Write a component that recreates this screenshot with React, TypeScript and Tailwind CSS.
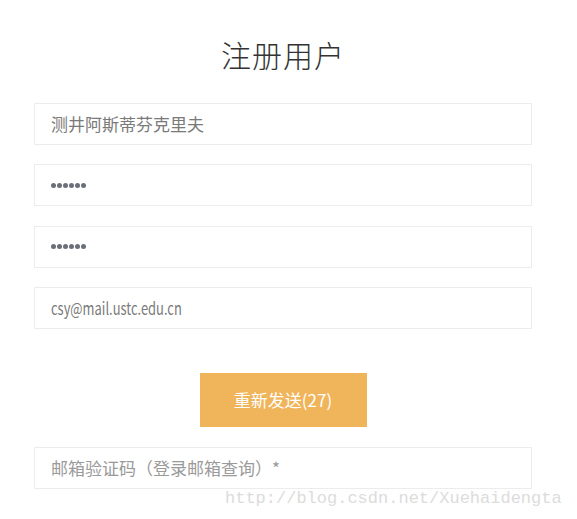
function Dots() {
  return (
    <div className="flex items-center gap-[1.4px]">
      {[0, 1, 2, 3, 4, 5].map((i) => (
        <span key={i} className="block h-[4.6px] w-[4.6px] rounded-full bg-[#6b6f78]" />
      ))}
    </div>
  );
}

export default function App() {
  const field =
    'h-[42px] w-full border border-[#ececec] bg-white px-[16px] flex items-center text-[17px] text-[#7a7a7a]';
  return (
    <div
      className="relative w-[577px] h-[519px] bg-white overflow-hidden"
      style={{ fontFamily: '"Noto Sans CJK SC", "Noto Sans", sans-serif' }}
    >
      <div className="ml-[34px] flex w-[498px] flex-col items-center pt-[33px]">
        <h1 className="text-[30px] leading-[42px] text-[#333] font-light tracking-[1px]">注册用户</h1>
        <div className="mt-[28px] flex w-full flex-col gap-[19.3px]">
          <div className={field}>测井阿斯蒂芬克里夫</div>
          <div className={field}>
            <Dots />
          </div>
          <div className={field}>
            <Dots />
          </div>
          <div className={field}>
            <span className="inline-block origin-left scale-x-[0.76] whitespace-nowrap">csy@mail.ustc.edu.cn</span>
          </div>
        </div>
        <button className="mt-[44px] h-[54px] w-[167px] bg-[#f0b45a] text-white text-[17px]">
          重新发送(27)
        </button>
        <div className={field + ' mt-[20px] text-[#9a9a9a]'}>邮箱验证码（登录邮箱查询）*</div>
      </div>
      <div
        className="absolute left-[225px] top-[486px] text-[17px] text-[#dcdcdc]"
        style={{ fontFamily: '"Liberation Mono", monospace' }}
      >
        http://blog.csdn.net/Xuehaidengta
      </div>
    </div>
  );
}
